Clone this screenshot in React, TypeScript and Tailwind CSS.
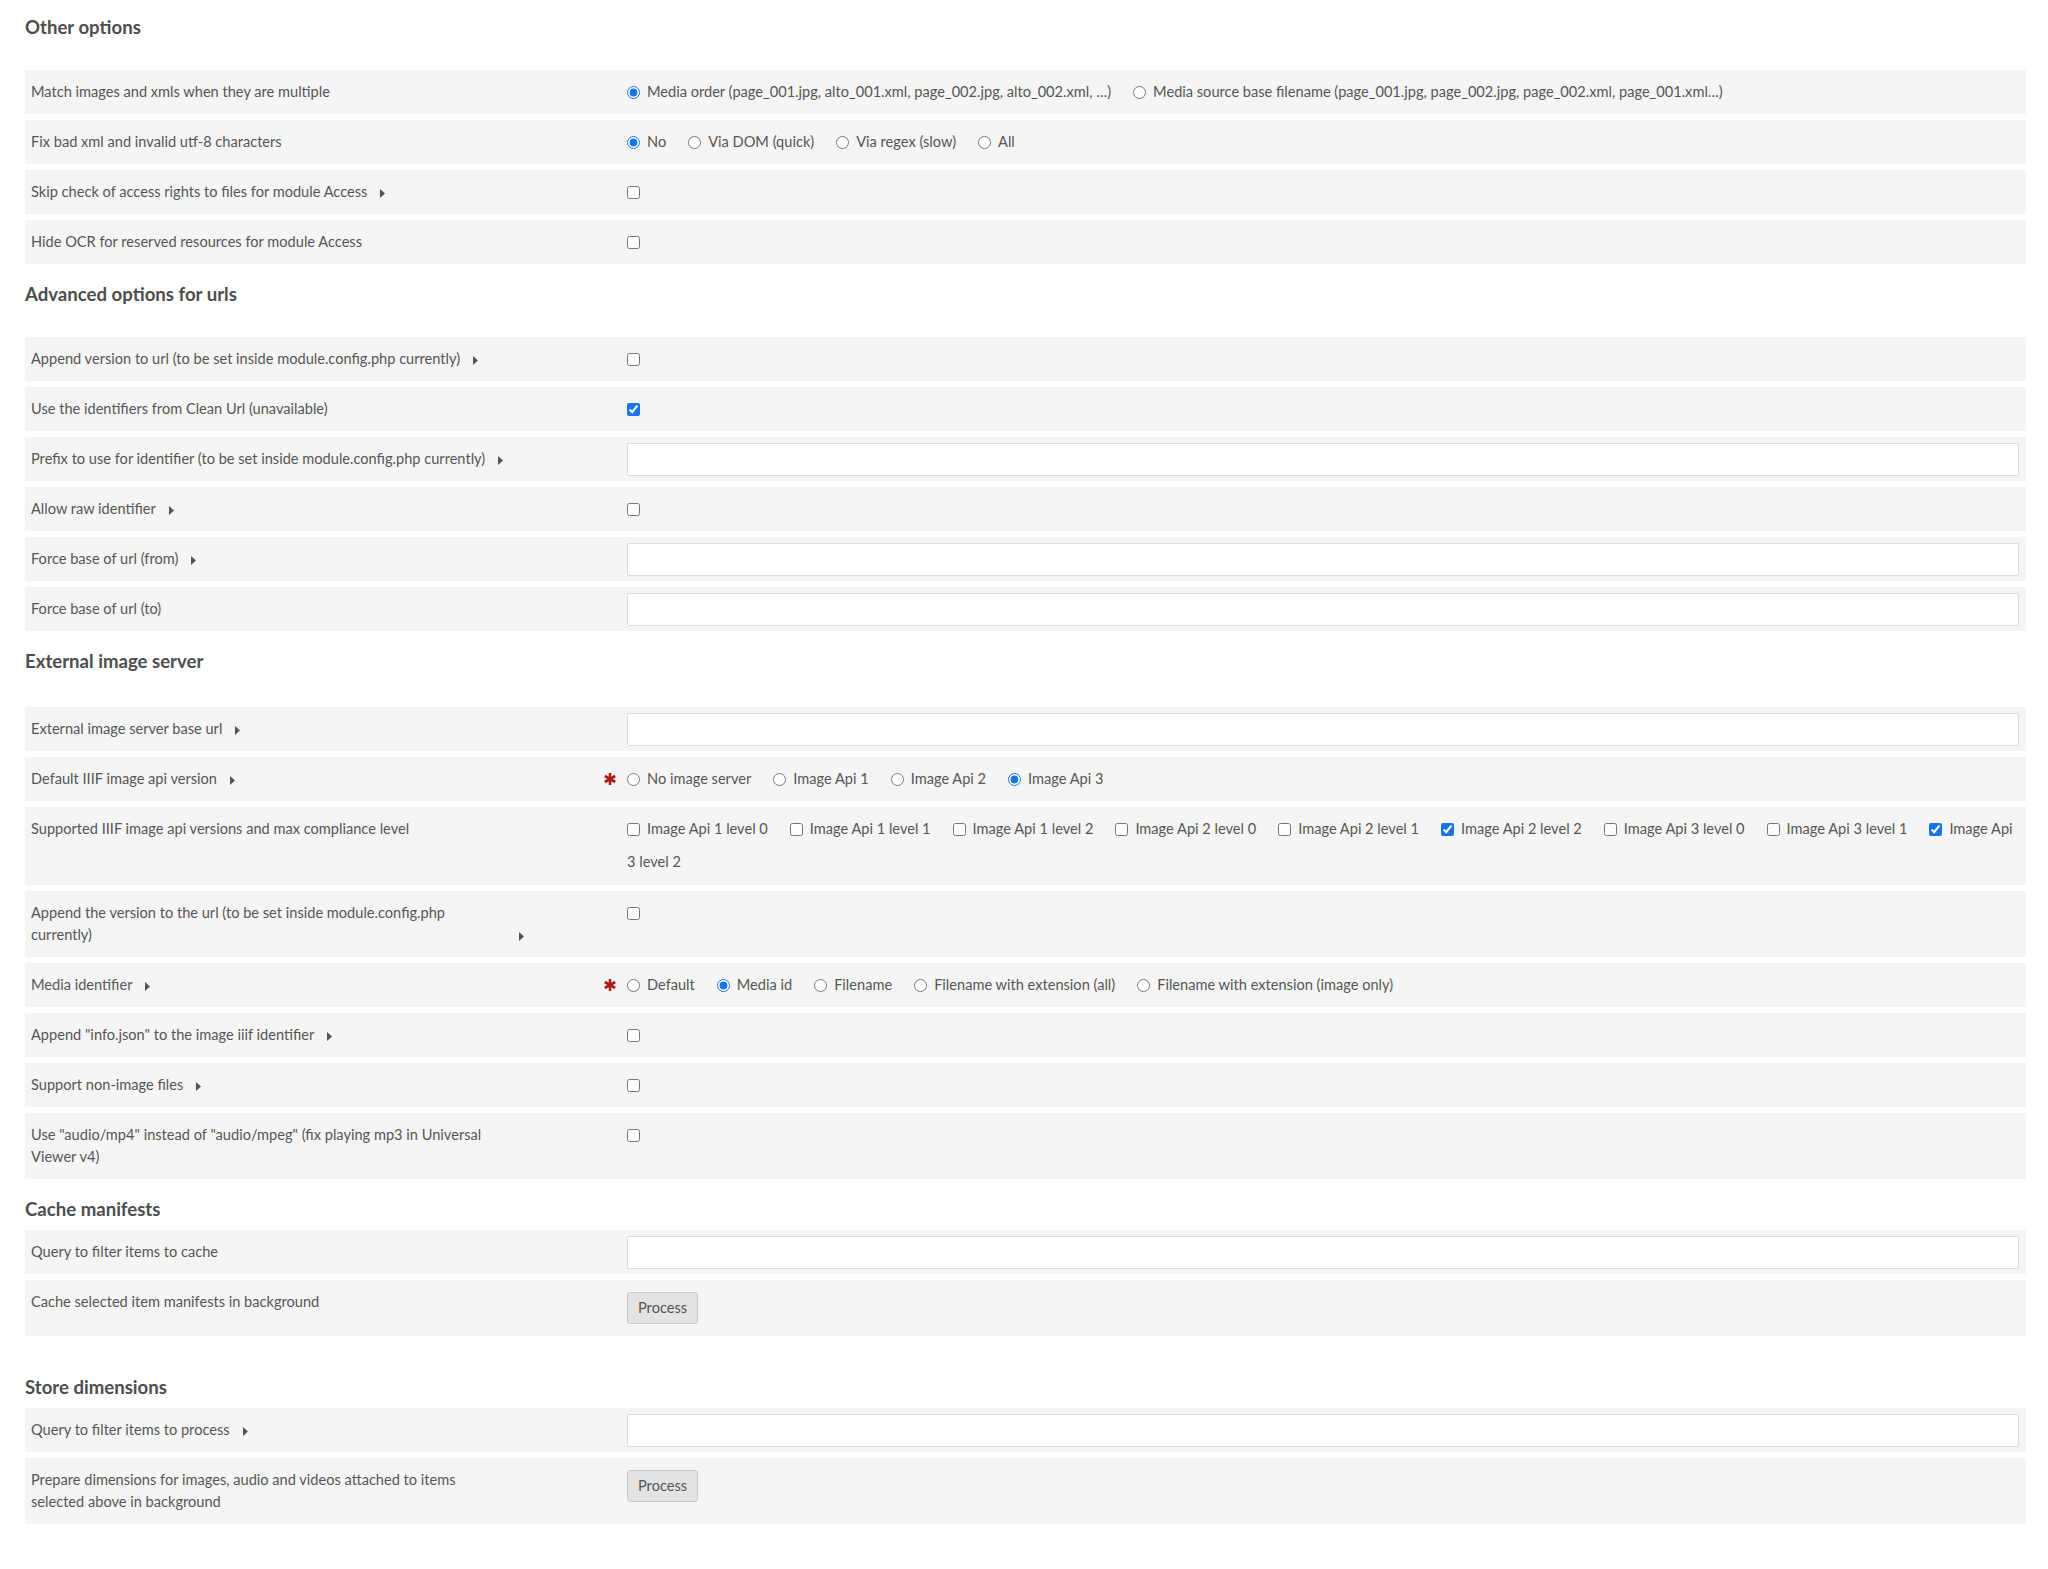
import React from "react";

type Field =
  | { kind: "radio"; options: string[]; checked: number }
  | { kind: "check"; checked?: boolean }
  | { kind: "checks"; options: string[]; checked: number[] }
  | { kind: "text" }
  | { kind: "button" };

type Row = { label: string; more?: boolean; required?: boolean; field: Field };

type Section = { title: string; headClass: string; rows: Row[] };

const sections: Section[] = [
  {
    title: "Other options",
    headClass: "mb-[31px]",
    rows: [
      {
        label: "Match images and xmls when they are multiple",
        field: {
          kind: "radio",
          checked: 0,
          options: [
            "Media order (page_001.jpg, alto_001.xml, page_002.jpg, alto_002.xml, …)",
            "Media source base filename (page_001.jpg, page_002.jpg, page_002.xml, page_001.xml…)",
          ],
        },
      },
      {
        label: "Fix bad xml and invalid utf-8 characters",
        field: { kind: "radio", checked: 0, options: ["No", "Via DOM (quick)", "Via regex (slow)", "All"] },
      },
      { label: "Skip check of access rights to files for module Access", more: true, field: { kind: "check" } },
      { label: "Hide OCR for reserved resources for module Access", field: { kind: "check" } },
    ],
  },
  {
    title: "Advanced options for urls",
    headClass: "pt-[12px] mb-[31px]",
    rows: [
      {
        label: "Append version to url (to be set inside module.config.php currently)",
        more: true,
        field: { kind: "check" },
      },
      { label: "Use the identifiers from Clean Url (unavailable)", field: { kind: "check", checked: true } },
      {
        label: "Prefix to use for identifier (to be set inside module.config.php currently)",
        more: true,
        field: { kind: "text" },
      },
      { label: "Allow raw identifier", more: true, field: { kind: "check" } },
      { label: "Force base of url (from)", more: true, field: { kind: "text" } },
      { label: "Force base of url (to)", field: { kind: "text" } },
    ],
  },
  {
    title: "External image server",
    headClass: "pt-[12px] mb-[34px]",
    rows: [
      { label: "External image server base url", more: true, field: { kind: "text" } },
      {
        label: "Default IIIF image api version",
        more: true,
        required: true,
        field: { kind: "radio", checked: 3, options: ["No image server", "Image Api 1", "Image Api 2", "Image Api 3"] },
      },
      {
        label: "Supported IIIF image api versions and max compliance level",
        field: {
          kind: "checks",
          checked: [5, 8],
          options: [
            "Image Api 1 level 0",
            "Image Api 1 level 1",
            "Image Api 1 level 2",
            "Image Api 2 level 0",
            "Image Api 2 level 1",
            "Image Api 2 level 2",
            "Image Api 3 level 0",
            "Image Api 3 level 1",
            "Image Api 3 level 2",
          ],
        },
      },
      {
        label: "Append the version to the url (to be set inside module.config.php currently)",
        more: true,
        field: { kind: "check" },
      },
      {
        label: "Media identifier",
        more: true,
        required: true,
        field: {
          kind: "radio",
          checked: 1,
          options: ["Default", "Media id", "Filename", "Filename with extension (all)", "Filename with extension (image only)"],
        },
      },
      { label: 'Append "info.json" to the image iiif identifier', more: true, field: { kind: "check" } },
      { label: "Support non-image files", more: true, field: { kind: "check" } },
      {
        label: 'Use "audio/mp4" instead of "audio/mpeg" (fix playing mp3 in Universal Viewer v4)',
        field: { kind: "check" },
      },
    ],
  },
  {
    title: "Cache manifests",
    headClass: "pt-[12px] mb-[9px]",
    rows: [
      { label: "Query to filter items to cache", field: { kind: "text" } },
      { label: "Cache selected item manifests in background", field: { kind: "button" } },
    ],
  },
  {
    title: "Store dimensions",
    headClass: "pt-[33px] mb-[9px]",
    rows: [
      { label: "Query to filter items to process", more: true, field: { kind: "text" } },
      {
        label: "Prepare dimensions for images, audio and videos attached to items selected above in background",
        field: { kind: "button" },
      },
    ],
  },
];

function Caret() {
  return (
    <svg width="5" height="9" viewBox="0 0 5 9" className="inline-block ml-[13px] align-[-1px]">
      <polygon points="0,0 5,4.5 0,9" fill="#555" />
    </svg>
  );
}

function Asterisk() {
  return (
    <svg width="12" height="12" viewBox="0 0 12 12" className="mt-[5px]">
      <g stroke="#a81c1c" strokeWidth="2.6">
        <line x1="6" y1="0" x2="6" y2="12" />
        <line x1="0.8" y1="3" x2="11.2" y2="9" />
        <line x1="0.8" y1="9" x2="11.2" y2="3" />
      </g>
    </svg>
  );
}

function Value({ field }: { field: Field }) {
  if (field.kind === "text") {
    return (
      <div className="flex-1 pt-[6px] pb-[5px]">
        <input type="text" className="block w-full h-[33px] bg-white border border-[#dcdcdc] rounded-[2px]" />
      </div>
    );
  }
  if (field.kind === "button") {
    return (
      <div className="flex-1 py-[12px]">
        <button className="h-[32px] px-[10px] bg-[#e3e3e3] border border-[#c8c8c8] rounded-[3px] text-[14.6px] text-[#555] leading-none">
          Process
        </button>
      </div>
    );
  }
  if (field.kind === "check") {
    return (
      <div className="flex-1 pt-[5px] pb-[6px] leading-[33px]">
        <input
          type="checkbox"
          defaultChecked={field.checked}
          className="relative top-[-1px] m-0 align-middle accent-[#1a73e8]"
        />
      </div>
    );
  }
  const isRadio = field.kind === "radio";
  return (
    <div className={`flex-1 pt-[5px] leading-[33px] ${isRadio ? "pb-[6px]" : "pb-[7px]"}`}>
      {field.options.map((opt, i) => {
        const on = isRadio ? field.checked === i : field.checked.includes(i);
        return (
          <label key={opt} className={i < field.options.length - 1 ? "mr-[22px]" : ""}>
            <input
              type={isRadio ? "radio" : "checkbox"}
              name={isRadio ? field.options[0] : undefined}
              defaultChecked={on}
              className="relative top-[-1px] m-0 mr-[7px] align-middle accent-[#1a73e8]"
            />
            {opt}
          </label>
        );
      })}
    </div>
  );
}

export default function App() {
  return (
    <div className="min-h-screen bg-white pl-[25px] pr-[22px] pt-[15px] pb-[40px] font-['Lato','Open_Sans',sans-serif] text-[14.6px] text-[#555]">
      {sections.map((s) => (
        <div key={s.title}>
          <h2 className={`text-[18.6px] leading-[24px] font-bold text-[#4d4d4d] ${s.headClass}`}>{s.title}</h2>
          {s.rows.map((r) => (
            <div key={r.label} className="flex items-start bg-[#f5f5f5] mb-[6px]">
              <div className="w-[602px] shrink-0 flex items-start py-[11px] pl-[6px] pr-[11px] leading-[22px]">
                <div className="flex-1">
                  <span className="inline-block max-w-[475px]">{r.label}</span>
                  {r.more && <Caret />}
                </div>
                {r.required && <Asterisk />}
              </div>
              <div className="flex-1 flex pr-[7px]">
                <Value field={r.field} />
              </div>
            </div>
          ))}
        </div>
      ))}
    </div>
  );
}
